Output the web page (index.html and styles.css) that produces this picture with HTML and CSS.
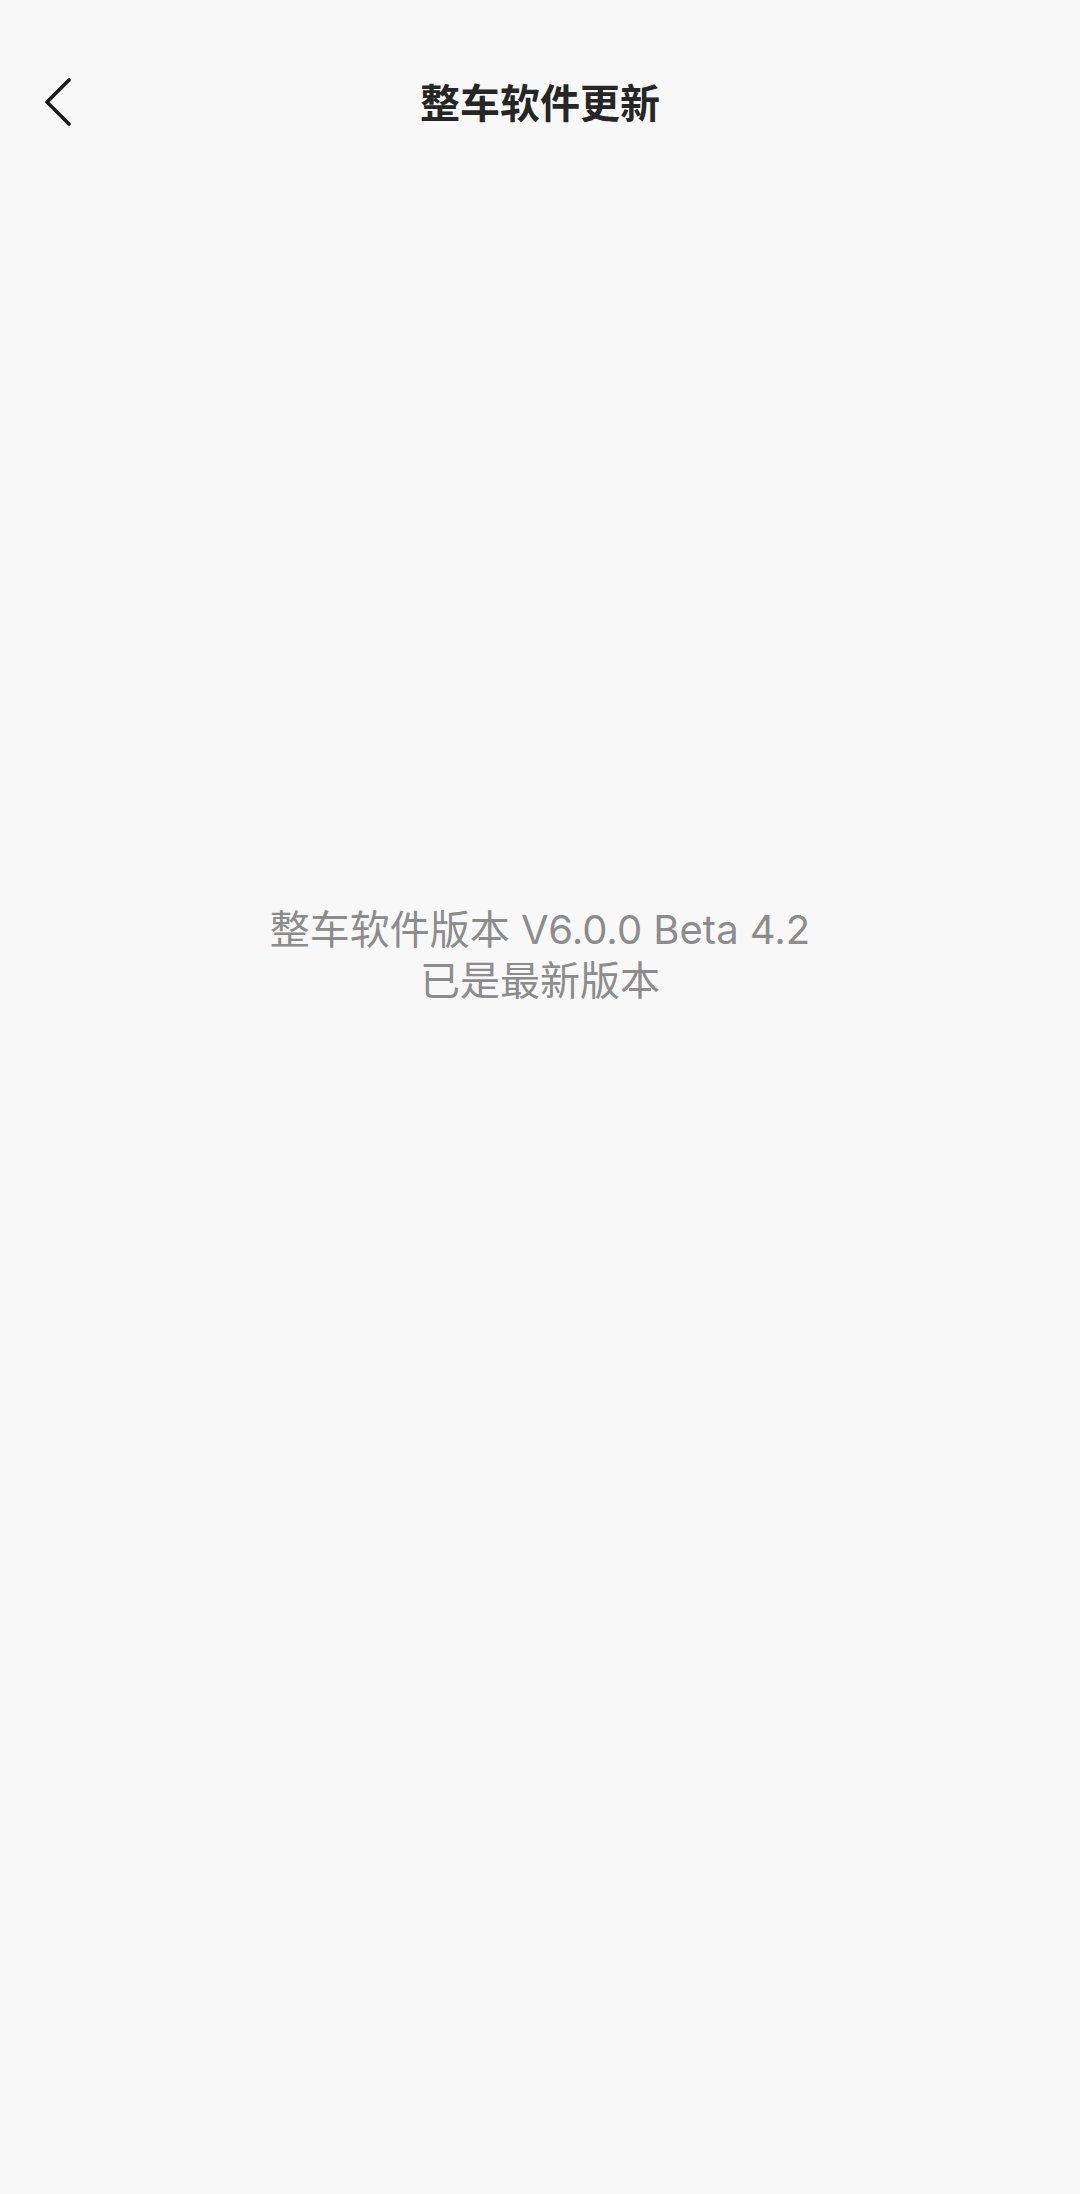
FILE: index.html
```html
<!DOCTYPE html>
<html lang="zh-CN">
<head>
<meta charset="utf-8">
<title>整车软件更新</title>
<link rel="stylesheet" href="styles.css">
</head>
<body>
<div class="page">
  <header class="nav">
    <button class="back" aria-label="返回">
      <svg width="28" height="48" viewBox="0 0 28 48"><path d="M25 2 L3 24 L25 46" fill="none" stroke="#1c1c1c" stroke-width="3.6" stroke-linecap="round" stroke-linejoin="round"/></svg>
    </button>
    <h1 class="title">整车软件更新</h1>
  </header>
  <main class="content">
    <p class="line">整车软件版本 V6.0.0 Beta 4.2</p>
    <p class="line">已是最新版本</p>
  </main>
</div>
</body>
</html>
```
FILE: styles.css
```css
html, body {
  margin: 0;
  padding: 0;
  background: #f8f8f8;
}
body {
  font-family: Inter, "Noto Sans CJK SC", sans-serif;
}
.page {
  width: 1080px;
  height: 2194px;
  display: flex;
  flex-direction: column;
}
.nav {
  position: relative;
  height: 140px;
  padding-top: 68px;
  box-sizing: border-box;
  display: flex;
  align-items: flex-start;
  justify-content: center;
}
.back {
  position: absolute;
  left: 44px;
  top: 78px;
  padding: 0;
  border: 0;
  background: none;
  display: flex;
}
.title {
  margin: 0;
  font-size: 40px;
  font-weight: 700;
  color: #262626;
  line-height: 72px;
  letter-spacing: 0;
}
.content {
  padding-top: 764px;
  display: flex;
  flex-direction: column;
  align-items: center;
}
.line {
  margin: 0;
  font-size: 40px;
  line-height: 51px;
  color: #8c8c8c;
  font-weight: 400;
}
```
